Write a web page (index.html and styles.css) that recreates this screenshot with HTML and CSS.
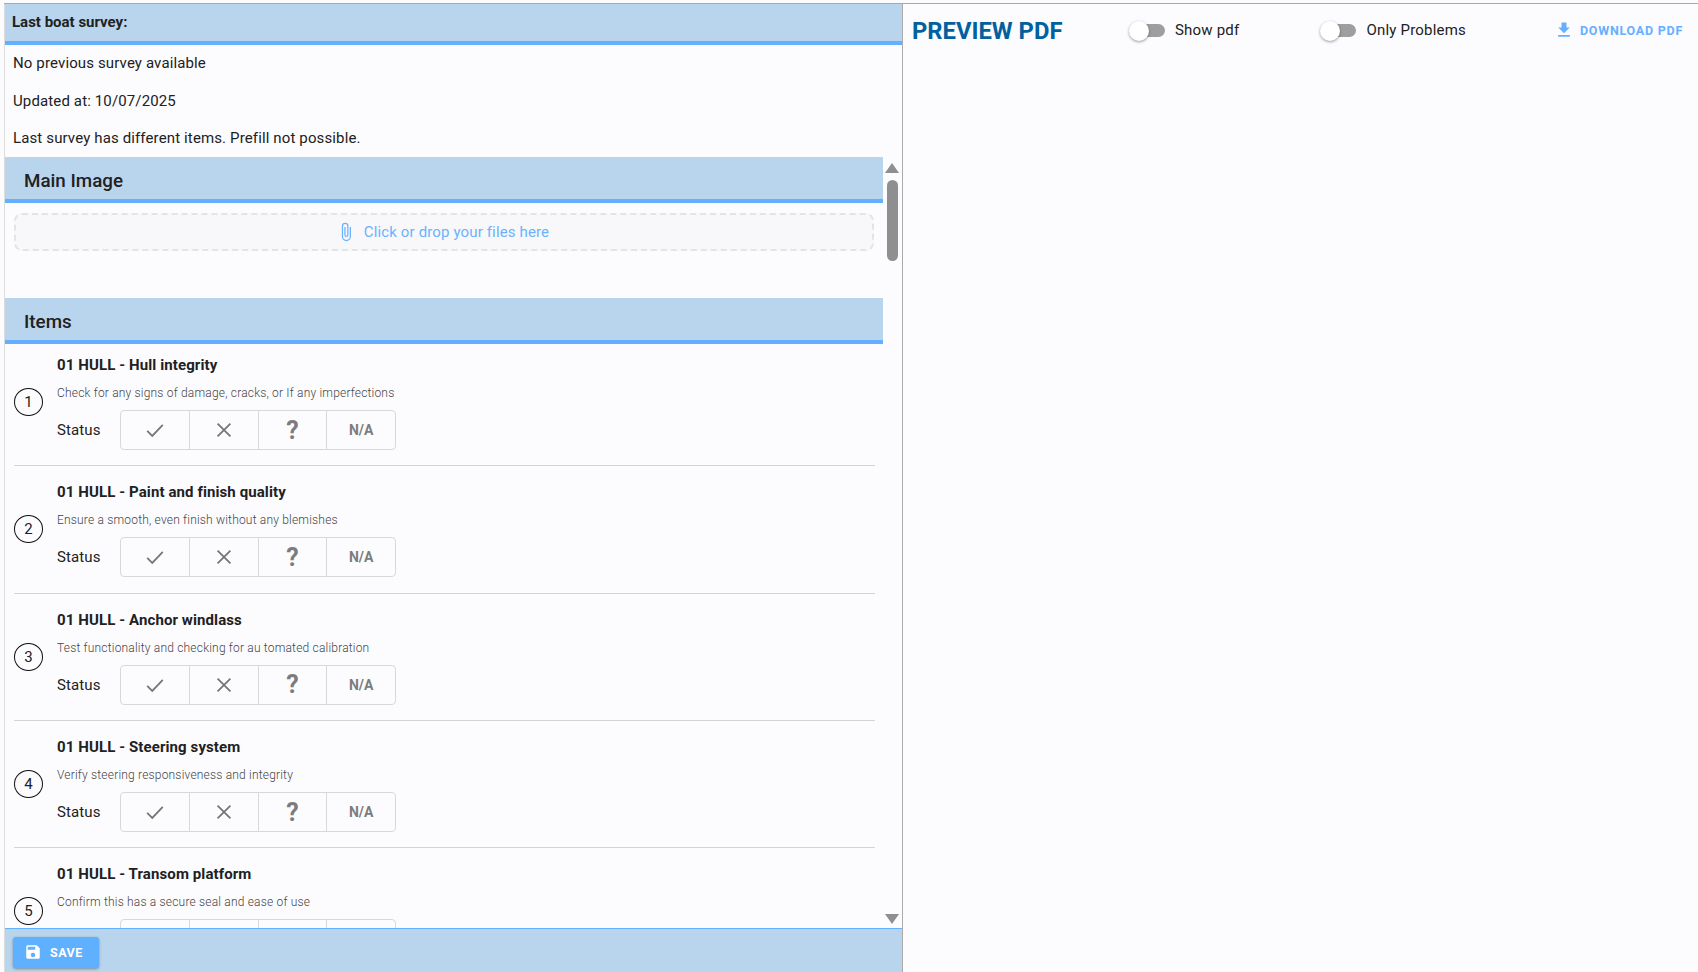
FILE: index.html
```html
<!DOCTYPE html>
<html lang="en">
<head>
<meta charset="utf-8">
<title>Survey</title>
<link rel="stylesheet" href="styles.css">
</head>
<body>
<div class="app">
  <main class="form">
    <header class="band band-small"><strong>Last boat survey:</strong></header>
    <div class="notes">
      <p>No previous survey available</p>
      <p>Updated at: 10/07/2025</p>
      <p>Last survey has different items. Prefill not possible.</p>
    </div>
    <div class="scroller">
      <div class="scroll-content">
        <h2 class="band band-title">Main Image</h2>
        <div class="dropzone">
          <svg class="clip" viewBox="0 0 24 24"><path d="M16.5 6v11.5a4 4 0 0 1-8 0V5a2.5 2.5 0 0 1 5 0v10.5a1 1 0 0 1-2 0V6H10v9.5a2.5 2.5 0 0 0 5 0V5a4 4 0 0 0-8 0v12.5a5.5 5.5 0 0 0 11 0V6z"/></svg>
          <span>Click or drop your files here</span>
        </div>
        <h2 class="band band-title items-title">Items</h2>
        <ul class="items">
          <li class="item">
            <span class="num">1</span>
            <div class="item-body">
              <h3>01 HULL - Hull integrity</h3>
              <p class="desc">Check for any signs of damage, cracks, or If any imperfections</p>
              <div class="status"><span class="status-label">Status</span>
                <div class="btns">
                  <button><svg viewBox="0 0 24 24"><path d="M3.5 13l5.5 5.5L20.5 6.5" /></svg></button>
                  <button><svg viewBox="0 0 24 24"><path d="M5 5l14 14M19 5L5 19" /></svg></button>
                  <button class="q">?</button>
                  <button class="na">N/A</button>
                </div>
              </div>
            </div>
          </li>
          <li class="item">
            <span class="num">2</span>
            <div class="item-body">
              <h3>01 HULL - Paint and finish quality</h3>
              <p class="desc">Ensure a smooth, even finish without any blemishes</p>
              <div class="status"><span class="status-label">Status</span>
                <div class="btns">
                  <button><svg viewBox="0 0 24 24"><path d="M3.5 13l5.5 5.5L20.5 6.5" /></svg></button>
                  <button><svg viewBox="0 0 24 24"><path d="M5 5l14 14M19 5L5 19" /></svg></button>
                  <button class="q">?</button>
                  <button class="na">N/A</button>
                </div>
              </div>
            </div>
          </li>
          <li class="item">
            <span class="num">3</span>
            <div class="item-body">
              <h3>01 HULL - Anchor windlass</h3>
              <p class="desc">Test functionality and checking for au tomated calibration</p>
              <div class="status"><span class="status-label">Status</span>
                <div class="btns">
                  <button><svg viewBox="0 0 24 24"><path d="M3.5 13l5.5 5.5L20.5 6.5" /></svg></button>
                  <button><svg viewBox="0 0 24 24"><path d="M5 5l14 14M19 5L5 19" /></svg></button>
                  <button class="q">?</button>
                  <button class="na">N/A</button>
                </div>
              </div>
            </div>
          </li>
          <li class="item">
            <span class="num">4</span>
            <div class="item-body">
              <h3>01 HULL - Steering system</h3>
              <p class="desc">Verify steering responsiveness and integrity</p>
              <div class="status"><span class="status-label">Status</span>
                <div class="btns">
                  <button><svg viewBox="0 0 24 24"><path d="M3.5 13l5.5 5.5L20.5 6.5" /></svg></button>
                  <button><svg viewBox="0 0 24 24"><path d="M5 5l14 14M19 5L5 19" /></svg></button>
                  <button class="q">?</button>
                  <button class="na">N/A</button>
                </div>
              </div>
            </div>
          </li>
          <li class="item">
            <span class="num">5</span>
            <div class="item-body">
              <h3>01 HULL - Transom platform</h3>
              <p class="desc">Confirm this has a secure seal and ease of use</p>
              <div class="status"><span class="status-label">Status</span>
                <div class="btns">
                  <button><svg viewBox="0 0 24 24"><path d="M3.5 13l5.5 5.5L20.5 6.5" /></svg></button>
                  <button><svg viewBox="0 0 24 24"><path d="M5 5l14 14M19 5L5 19" /></svg></button>
                  <button class="q">?</button>
                  <button class="na">N/A</button>
                </div>
              </div>
            </div>
          </li>
        </ul>
      </div>
      <div class="scrollbar">
        <i class="arrow-up"></i>
        <i class="thumb"></i>
        <i class="track"></i>
        <i class="arrow-down"></i>
      </div>
    </div>
    <footer class="savebar">
      <button class="save">
        <svg viewBox="0 0 24 24"><path d="M17 3H5a2 2 0 0 0-2 2v14a2 2 0 0 0 2 2h14a2 2 0 0 0 2-2V7zm-5 16a3 3 0 1 1 0-6 3 3 0 0 1 0 6zm3-10H5V5h10z"/></svg>
        <span>SAVE</span>
      </button>
    </footer>
  </main>
  <section class="preview">
    <div class="toolbar">
      <h1>PREVIEW PDF</h1>
      <label class="switch switch-first"><span class="track-s"><span class="knob"></span></span><span>Show pdf</span></label>
      <label class="switch switch-second"><span class="track-s"><span class="knob"></span></span><span>Only Problems</span></label>
      <button class="download">
        <svg viewBox="0 0 24 24"><path d="M19 9h-4V3H9v6H5l7 7zM5 18v2h14v-2z"/></svg>
        <span>DOWNLOAD PDF</span>
      </button>
    </div>
  </section>
</div>
</body>
</html>
```

FILE: styles.css
```css
* { box-sizing: border-box; }
html, body { margin: 0; height: 100%; overflow: hidden; }
body {
  background: #fcfcff;
  color: #212121;
  font-family: Roboto, "Liberation Sans", sans-serif;
  font-size: 14px;
  padding: 3px 0 0 4px;
}
.app {
  display: flex;
  height: 969px;
  border-top: 1px solid #a8a8a8;
}
.form {
  width: 899px;
  height: 100%;
  display: flex;
  flex-direction: column;
  border-left: 1px solid #dcdcdc;
  border-right: 1px solid #aaa;
  flex: none;
}
.band {
  margin: 0;
  background: #b9d5ee;
  border-bottom: 4px solid #62b0ff;
}
.band-small {
  height: 41px;
  padding: 10px 7px 0;
  font-size: 15px;
  line-height: 16px;
}
.notes {
  height: 112px;
  padding: 8px 8px 0;
  flex: none;
}
.notes p {
  margin: 0 0 17px;
  height: 20.5px;
  line-height: 20px;
  font-size: 15px;
  letter-spacing: 0.13px;
}
.scroller {
  flex: 1;
  min-height: 0;
  display: flex;
  overflow: hidden;
}
.scroll-content {
  width: 878px;
  flex: none;
  overflow: hidden;
}
.band-title {
  height: 46px;
  padding: 12px 19px 0;
  font-size: 18.8px;
  line-height: 24px;
  font-weight: 500;
}
.dropzone {
  margin: 10px 9px 0;
  height: 38px;
  width: 860px;
  border: 2.5px dashed #e4e4e7;
  border-radius: 8px;
  background: #f8f8fa;
  color: #6ab2ff;
  display: flex;
  align-items: center;
  justify-content: center;
  gap: 8px;
  font-size: 15px;
  letter-spacing: 0.14px;
}
.clip { width: 20px; height: 20px; fill: #6ab2ff; margin-left: -3px; }
.items-title { margin-top: 47px; }
.items { list-style: none; margin: -5px 0 0; padding: 0 8px 0 9px; }
.item {
  height: 127.3px;
  display: flex;
  align-items: center;
  border-bottom: 1px solid #d4d4d4;
  gap: 14px;
  padding-bottom: 4px;
}
.num {
  width: 29px;
  height: 28px;
  margin-top: 4px;
  border: 1px solid #111;
  border-radius: 50%;
  display: flex;
  align-items: center;
  justify-content: center;
  font-size: 15px;
  font-weight: 400;
  flex: none;
}
.item-body { padding-top: 5px; }
.item h3 {
  margin: 0;
  font-size: 15px;
  line-height: 20px;
  font-weight: 700;
  letter-spacing: 0.1px;
}
.desc {
  margin: 9px 0 0;
  font-size: 12px;
  line-height: 18px;
  font-weight: 300;
  letter-spacing: 0.19px;
  color: #444;
}
.status { display: flex; align-items: center; margin-top: 8px; }
.status-label { width: 63px; font-size: 15px; letter-spacing: 0.1px; }
.btns {
  display: flex;
  height: 40px;
  width: 276px;
  border: 1px solid #d8d8d8;
  border-radius: 4px;
}
.btns button {
  flex: 1;
  border: 0;
  border-right: 1px solid #d8d8d8;
  background: transparent;
  padding: 0;
  display: flex;
  align-items: center;
  justify-content: center;
  color: #7c7c7c;
  font-family: inherit;
}
.btns button:last-child { border-right: 0; }
.btns svg { width: 22px; height: 22px; fill: none; stroke: #757575; stroke-width: 1.9; }
.q { font-size: 25px; font-weight: 700; }
.na { font-size: 14px; font-weight: 700; }
.scrollbar {
  width: 18px;
  flex: none;
  display: flex;
  flex-direction: column;
  align-items: center;
  padding: 6px 0 4px;
}
.scrollbar i { display: block; flex: none; }
.arrow-up, .arrow-down {
  width: 0;
  height: 0;
  border-left: 7px solid transparent;
  border-right: 7px solid transparent;
}
.arrow-up { border-bottom: 10px solid #8f8f8f; }
.arrow-down { border-top: 10px solid #8f8f8f; }
.thumb {
  width: 11px;
  height: 81px;
  margin-top: 7px;
  border-radius: 6px;
  background: #8f8f8f;
}
.scrollbar .track { flex: 1; }
.savebar {
  height: 44px;
  flex: none;
  background: #b9d5ee;
  border-top: 1px solid #62b0ff;
  padding: 8px 8px 0;
}
.save {
  width: 86px;
  height: 31px;
  border: 0;
  border-radius: 3px;
  background: #5fb0ff;
  color: #fff;
  display: flex;
  align-items: center;
  gap: 8px;
  padding: 0 0 1px 11px;
  font-family: inherit;
  font-size: 12.5px;
  font-weight: 700;
  letter-spacing: 0.5px;
  box-shadow: 0 1px 3px rgba(0,0,0,.35);
}
.save svg { width: 18px; height: 18px; fill: #fff; }
.preview { flex: 1; min-width: 0; }
.toolbar {
  display: flex;
  align-items: center;
  height: 52px;
  padding: 0 15px 0 9px;
}
.toolbar h1 {
  margin: 1px 0 0;
  width: 151px;
  font-size: 23.8px;
  font-weight: 700;
  color: #01619f;
  white-space: nowrap;
}
.switch { display: flex; align-items: center; gap: 10px; font-size: 15px; letter-spacing: 0.2px; }
.switch-first { margin-left: 68px; }
.switch-second { margin-left: 83px; }
.track-s {
  position: relative;
  display: block;
  width: 34px;
  height: 13px;
  border-radius: 7px;
  background: #9e9e9e;
}
.knob {
  position: absolute;
  left: -2px;
  top: -3px;
  width: 20px;
  height: 20px;
  border-radius: 50%;
  background: #fff;
  box-shadow: 0 1px 3px rgba(0,0,0,.4);
}
.download {
  margin-left: auto;
  background: transparent;
  border: 0;
  padding: 0;
  display: flex;
  align-items: center;
  gap: 6px;
  color: #64b0ff;
  font-family: inherit;
  font-size: 12.5px;
  font-weight: 700;
  letter-spacing: 0.75px;
}
.download svg { width: 20px; height: 20px; fill: #64b0ff; }
```
